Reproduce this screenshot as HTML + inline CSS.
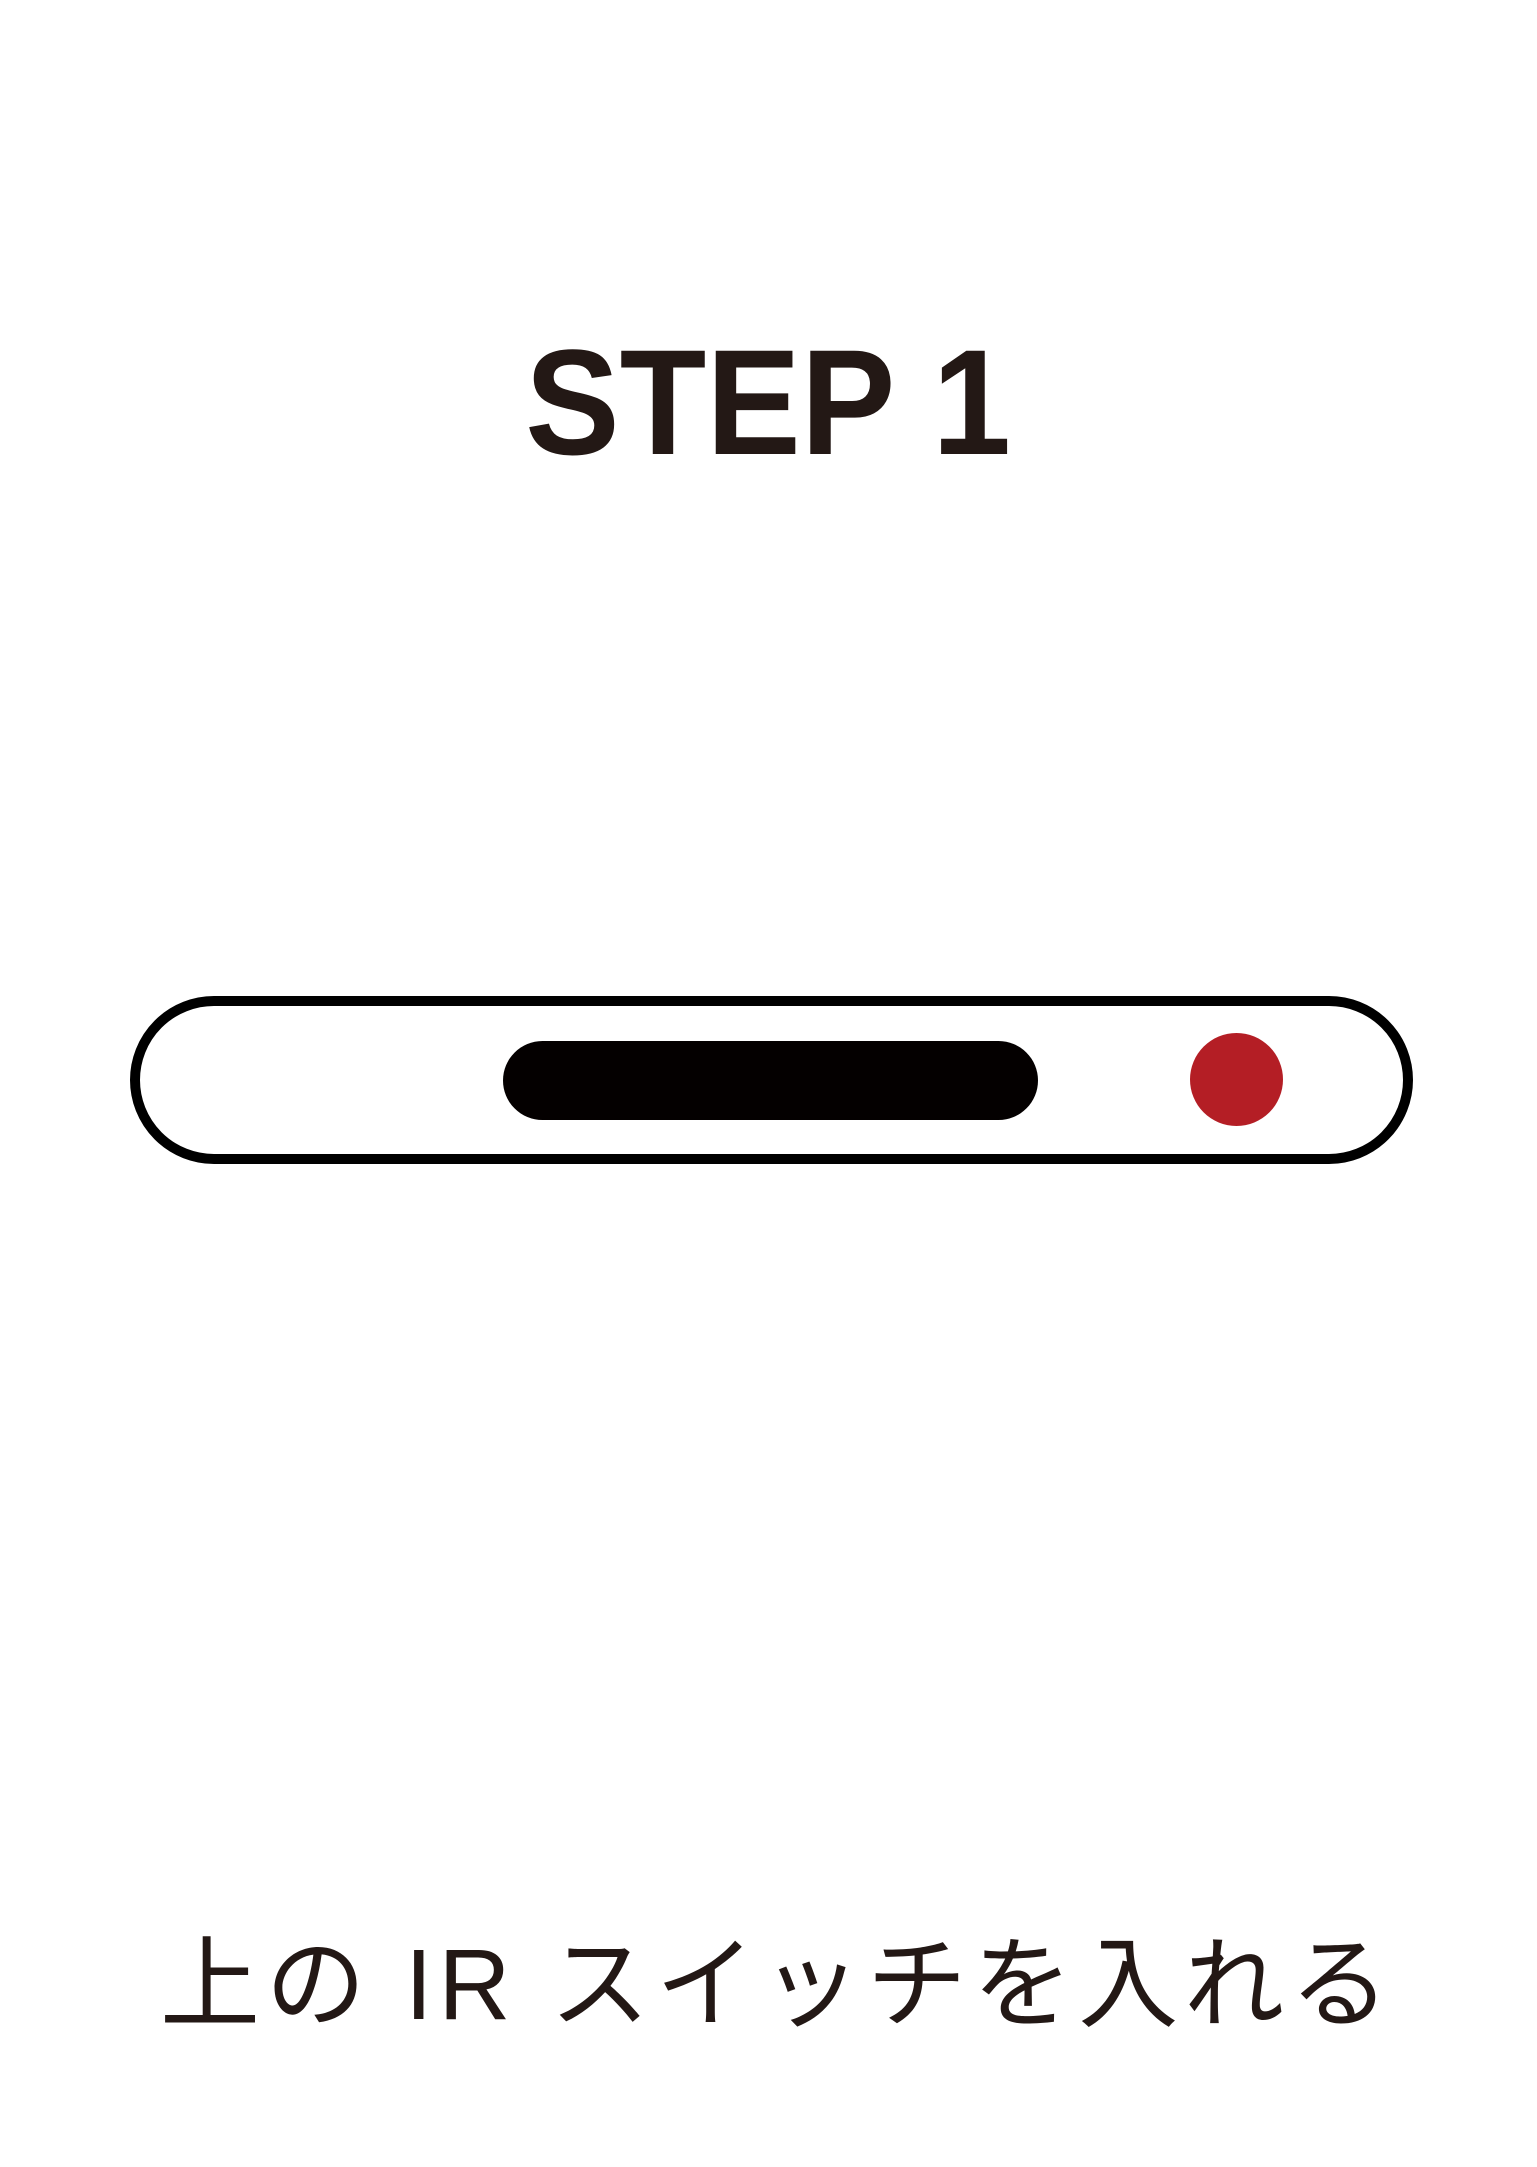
<!DOCTYPE html>
<html><head><meta charset="utf-8"><style>
html,body{margin:0;padding:0;background:#fff;}
body{width:1537px;height:2167px;position:relative;overflow:hidden;}
.step{position:absolute;left:0;width:1537px;top:322px;text-align:center;font-family:"Liberation Sans",Arial,sans-serif;font-weight:bold;font-size:150px;line-height:160px;color:#231815;}
.step span{display:inline-block;transform:scaleX(0.945);}
.outer{position:absolute;left:130px;top:996px;width:1263px;height:148px;border:10px solid #000;border-radius:84px;}
.bar{position:absolute;left:503px;top:1041px;width:535px;height:79px;background:#040000;border-radius:40px;}
.dot{position:absolute;left:1190px;top:1033px;width:93px;height:93px;background:#b41e25;border-radius:50%;}
.jp{position:absolute;left:160px;top:1925px;font-family:"Liberation Sans","Noto Sans CJK JP",sans-serif;font-weight:400;font-size:100px;line-height:120px;letter-spacing:5.7px;color:#231815;white-space:nowrap;}
</style></head><body>
<div class="step"><span>STEP 1</span></div>
<div class="outer"></div>
<div class="bar"></div>
<div class="dot"></div>
<div class="jp">上の IR スイッチを入れる</div>
</body></html>
